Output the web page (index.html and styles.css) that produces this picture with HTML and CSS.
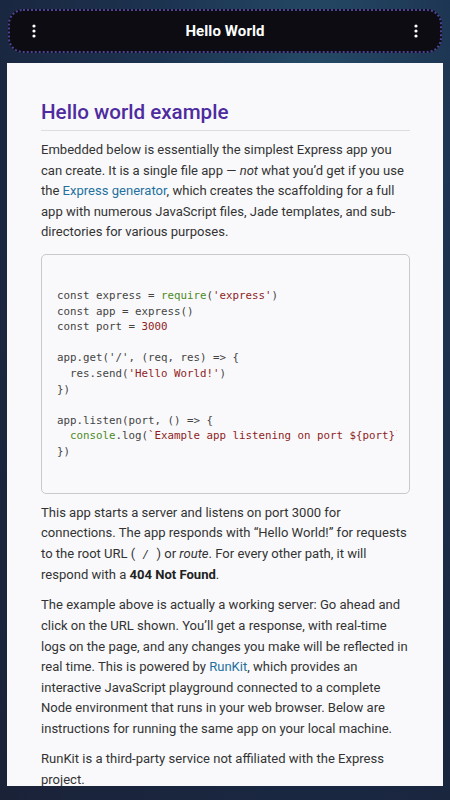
FILE: index.html
```html
<!DOCTYPE html>
<html>
<head>
<meta charset="utf-8">
<link rel="stylesheet" href="styles.css">
</head>
<body>
<div class="screen">
  <header class="topbar">
    <span class="kebab"><svg width="4" height="14" viewBox="0 0 4 14"><circle cx="2" cy="2" r="1.6" fill="#fff"/><circle cx="2" cy="7" r="1.6" fill="#fff"/><circle cx="2" cy="12" r="1.6" fill="#fff"/></svg></span>
    <h1 class="title">Hello World</h1>
    <span class="kebab"><svg width="4" height="14" viewBox="0 0 4 14"><circle cx="2" cy="2" r="1.6" fill="#fff"/><circle cx="2" cy="7" r="1.6" fill="#fff"/><circle cx="2" cy="12" r="1.6" fill="#fff"/></svg></span>
  </header>
  <main class="card">
    <h2 class="heading">Hello world example</h2>
    <p>Embedded below is essentially the simplest Express app you can create. It is a single file app — <em>not</em> what you’d get if you use the <a href="#">Express generator</a>, which creates the scaffolding for a full app with numerous JavaScript files, Jade templates, and sub-directories for various purposes.</p>
    <div class="codebox"><pre><code>const express = <span class="fn">require</span>(<span class="str">'express'</span>)
const app = express()
const port = <span class="str">3000</span>

app.get('/', (req, res) =&gt; {
  res.send(<span class="str">'Hello World!'</span>)
})

app.listen(port, () =&gt; {
  <span class="fn">console</span>.log(<span class="str">`Example app listening on port ${port}`</span>)
})</code></pre></div>
    <p>This app starts a server and listens on port 3000 for connections. The app responds with “Hello World!” for requests to the root URL ( <code class="inline">/</code> ) or <em>route</em>. For every other path, it will respond with a <strong>404 Not Found</strong>.</p>
    <p>The example above is actually a working server: Go ahead and click on the URL shown. You’ll get a response, with real-time logs on the page, and any changes you make will be reflected in real time. This is powered by <a href="#">RunKit</a>, which provides an interactive JavaScript playground connected to a complete Node environment that runs in your web browser. Below are instructions for running the same app on your local machine.</p>
    <p>RunKit is a third-party service not affiliated with the Express project.</p>
  </main>
</div>
</body>
</html>
```
FILE: styles.css
```css
html, body {
  margin: 0;
  padding: 0;
  height: 100%;
}
body {
  background: radial-gradient(ellipse at 70% 10%, #254a66 0%, #1c3350 35%, #1a2740 70%, #1a2238 100%);
  font-family: Roboto, "Noto Sans", sans-serif;
  overflow: hidden;
}
.screen {
  height: 800px;
  display: flex;
  flex-direction: column;
  padding: 9px 7px 0 7px;
  box-sizing: border-box;
}
.topbar {
  margin: 0 1px;
  height: 44px;
  box-sizing: border-box;
  background: #0c0c12;
  border: 2px dotted #4d4296;
  border-radius: 15px;
  display: flex;
  align-items: center;
  justify-content: space-between;
  padding: 0 22px 0 22px;
}
.kebab {
  display: flex;
  width: 4px;
  height: 14px;
}
.title {
  margin: 0;
  color: #fff;
  font-size: 15px;
  font-weight: 700;
  letter-spacing: 0.1px;
}
.card {
  margin-top: 10px;
  height: 723px;
  background: #f9f9fb;
  padding: 36px 33px 0 34px;
  box-sizing: border-box;
  overflow: hidden;
  color: #333;
  font-size: 13.05px;
  line-height: 20.6px;
}
.heading {
  margin: 0 0 9px 0;
  padding-bottom: 5px;
  font-size: 20.6px;
  line-height: 26px;
  font-weight: 500;
  color: #4e2b9e;
  border-bottom: 1px solid #dcdde3;
}
p {
  margin: 0 0 9.6px 0;
}
a {
  color: #25719e;
  text-decoration: none;
}
strong {
  color: #222;
}
.codebox {
  margin: 11px 0 9px 0;
  border: 1px solid #c9c9cc;
  border-radius: 5px;
  background: #f9f9fb;
  overflow: hidden;
  padding: 33px 12px 33px 15px;
}
.codebox pre {
  margin: 0;
  font-family: "DejaVu Sans Mono", monospace;
  font-size: 10.8px;
  line-height: 15.6px;
  color: #444;
  white-space: pre;
  overflow: hidden;
}
.fn {
  color: #4c8a1e;
}
.str {
  color: #8f1d1d;
}
.inline {
  font-family: "DejaVu Sans Mono", monospace;
  font-size: 11px;
  font-style: italic;
  padding: 0 4px;
}
```
